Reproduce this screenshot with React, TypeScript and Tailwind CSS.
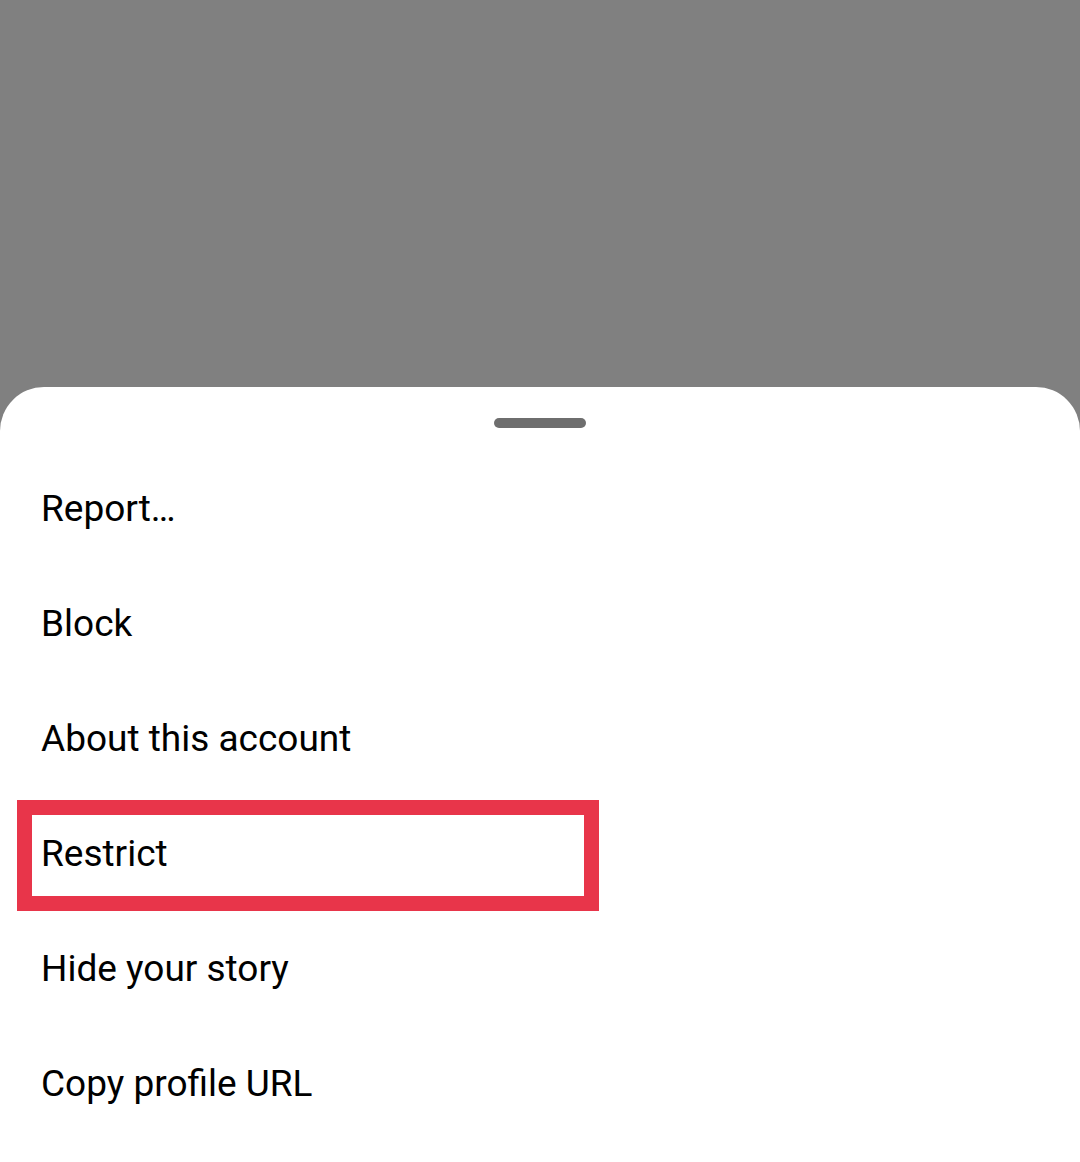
import React from 'react'

const items = ['Report…', 'Block', 'About this account', 'Restrict', 'Hide your story', 'Copy profile URL']

export default function App() {
    return (
        <div className="flex h-[1162px] w-[1080px] flex-col overflow-hidden bg-[#808080]" style={{ fontFamily: 'Roboto, "Noto Sans", sans-serif' }}>
            <div className="h-[387px] shrink-0" />
            <div className="flex flex-1 flex-col rounded-t-[44px] bg-white">
                <div className="flex justify-center pt-[31px]">
                    <div className="h-[10px] w-[92px] rounded-full bg-[#6e6e6e]" />
                </div>
                <ul className="mt-[23px] flex flex-col">
                    {items.map((label) => (
                        <li key={label} className="relative flex h-[115px] items-center px-[41px] text-[37px] text-black">
                            {label === 'Restrict' && (
                                <div className="absolute bottom-0 left-[17px] top-[4px] w-[582px] border-[15px] border-[#e8354a]" />
                            )}
                            <span className="relative">{label}</span>
                        </li>
                    ))}
                </ul>
            </div>
        </div>
    )
}
